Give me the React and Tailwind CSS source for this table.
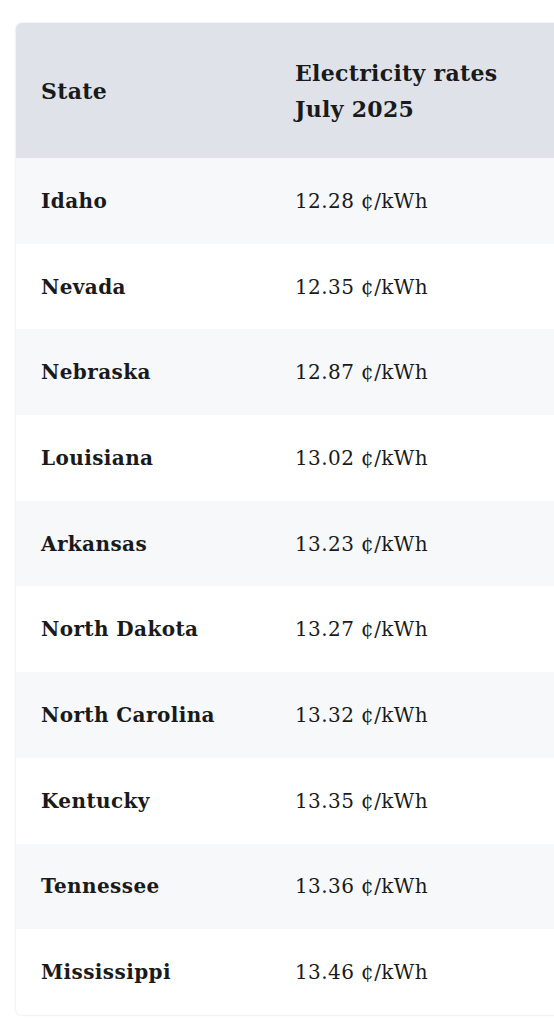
import React from 'react';

const rates = [
  { state: 'Idaho', rate: '12.28' },
  { state: 'Nevada', rate: '12.35' },
  { state: 'Nebraska', rate: '12.87' },
  { state: 'Louisiana', rate: '13.02' },
  { state: 'Arkansas', rate: '13.23' },
  { state: 'North Dakota', rate: '13.27' },
  { state: 'North Carolina', rate: '13.32' },
  { state: 'Kentucky', rate: '13.35' },
  { state: 'Tennessee', rate: '13.36' },
  { state: 'Mississippi', rate: '13.46' },
];

const App = () => {
  return (
    <div className="min-h-screen bg-white overflow-hidden pt-[23px] pl-4 font-['DejaVu_Serif',serif] text-[#1a1a1a]">
      <div className="w-[640px] rounded-md overflow-hidden shadow-[0_0_2px_rgba(100,130,170,0.35)]">
        <div className="flex bg-[#dfe3e9] font-bold text-[22px] leading-[36px] tracking-[0.3px]">
          <div className="w-[279px] pl-[25px] flex items-center">State</div>
          <div className="flex-1 py-[31.5px]">
            Electricity rates
            <br />
            July 2025
          </div>
        </div>
        {rates.map((r, i) => (
          <div
            key={r.state}
            className={`flex h-[85.7px] items-center text-[20px] tracking-[0.4px] ${i % 2 === 0 ? 'bg-[#f6f8fa]' : 'bg-white'}`}
          >
            <div className="w-[279px] pl-[25px] font-bold">{r.state}</div>
            <div className="flex-1">{r.rate} ¢/kWh</div>
          </div>
        ))}
      </div>
    </div>
  );
};

export default App;
